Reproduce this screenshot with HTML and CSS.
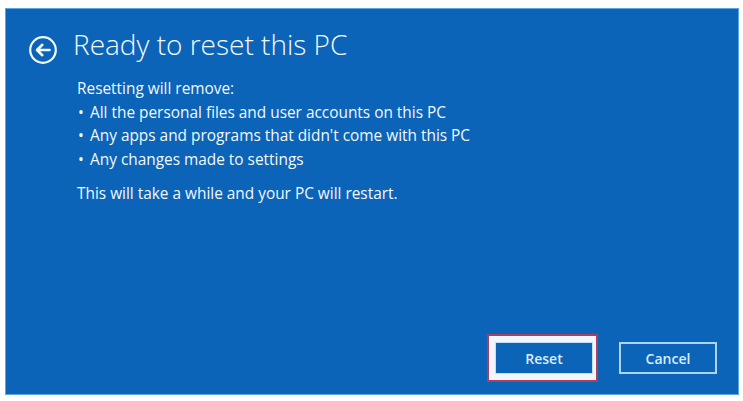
FILE: index.html
```html
<!DOCTYPE html>
<html lang="en">
<head>
<meta charset="utf-8">
<title>Ready to reset this PC</title>
<link rel="stylesheet" href="styles.css">
</head>
<body>
<div class="stage">
  <div class="panel">
    <div class="header">
      <svg class="back" width="28" height="28" viewBox="0 0 28 28" aria-hidden="true">
        <circle cx="14" cy="14" r="12.8" fill="none" stroke="#f4f9fd" stroke-width="2.2"/>
        <path d="M20.5 14H8.2M13.3 8.8L8 14l5.3 5.2" fill="none" stroke="#f4f9fd" stroke-width="2.6" stroke-linecap="round" stroke-linejoin="round"/>
      </svg>
      <h1 class="title">Ready to reset this PC</h1>
    </div>
    <div class="content">
      <p class="line">Resetting will remove:</p>
      <ul class="list">
        <li>All the personal files and user accounts on this PC</li>
        <li>Any apps and programs that didn't come with this PC</li>
        <li>Any changes made to settings</li>
      </ul>
      <p class="line note">This will take a while and your PC will restart.</p>
    </div>
    <div class="footer">
      <span class="focus"><button class="btn">Reset</button></span>
      <button class="btn">Cancel</button>
    </div>
  </div>
</div>
</body>
</html>
```
FILE: styles.css
```css
html, body {
  margin: 0;
  padding: 0;
  background: #ffffff;
}
.stage {
  padding: 8px 0 0 5px;
}
.panel {
  box-sizing: border-box;
  width: 734px;
  height: 387px;
  background: #0b64b7;
  border: 1px solid #5ea6df;
  display: flex;
  flex-direction: column;
  color: #f2f8fd;
  font-family: "Open Sans", "Noto Sans", sans-serif;
}
.header {
  display: flex;
  align-items: flex-start;
  padding: 17px 0 0 23px;
  gap: 16px;
}
.back {
  margin-top: 10px;
  flex: none;
}
.title {
  margin: 0;
  font-size: 28px;
  font-weight: 300;
  line-height: 36px;
  color: #f4f9fd;
}
.content {
  padding-left: 71px;
  margin-top: 13px;
  font-size: 15.4px;
  line-height: 23.5px;
}
.line {
  margin: 0;
}
.list {
  list-style: none;
  margin: 0;
  padding: 0;
}
.list li {
  display: flex;
}
.list li::before {
  content: "\2022";
  width: 13px;
  padding-left: 1px;
  box-sizing: border-box;
  flex: none;
}
.note {
  margin-top: 10.5px;
}
.footer {
  margin-top: auto;
  display: flex;
  justify-content: flex-end;
  align-items: center;
  gap: 21px;
  padding: 0 21px 12px 0;
}
.focus {
  display: flex;
  border: 2px solid #a8405e;
  background: #f3f5fa;
  padding: 6px 3px 6px 6px;
}
.btn {
  box-sizing: border-box;
  width: 98px;
  height: 32px;
  margin: 0;
  background: #0b64b7;
  border: 2px solid #a9d6f6;
  color: #d9ecfa;
  font-family: "Open Sans", "Noto Sans", sans-serif;
  font-size: 14px;
  font-weight: 600;
  padding: 0;
}
.focus .btn {
  border: 1px solid #bfe0f7;
}
```
